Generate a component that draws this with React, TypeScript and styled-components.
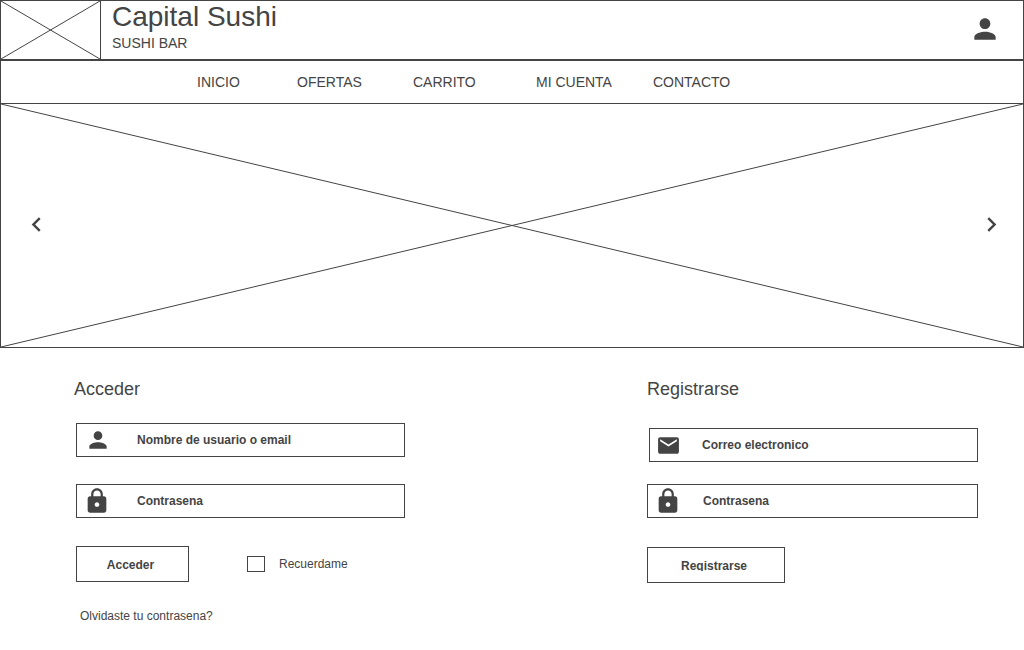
import React from "react";
import styled, { createGlobalStyle } from "styled-components";
import { MdChevronLeft, MdChevronRight, MdEmail, MdLock, MdPerson } from "react-icons/md";

const ink = "#444";

const GlobalStyle = createGlobalStyle`
  *, *::before, *::after { box-sizing: border-box; }
  body {
    margin: 0;
    background: #fff;
    color: ${ink};
    font-family: "Liberation Sans", Arial, sans-serif;
    font-size: 12px;
  }
  h1, h2, p { margin: 0; font-weight: 400; }
  button, input { font: inherit; color: inherit; }
  svg { display: block; flex: none; }
`;

const Header = styled.header`
  display: flex;
  height: 60px;
  border: 1px solid ${ink};
`;

const Logo = styled.div`
  width: 100px;
  border-right: 1px solid ${ink};
`;

const Brand = styled.div`
  flex: 1;
  padding-left: 11px;
`;

const BrandName = styled.h1`
  font-size: 28px;
  line-height: 32px;
`;

const Tagline = styled.p`
  font-size: 14px;
  line-height: 20px;
`;

const IconButton = styled.button`
  display: flex;
  align-items: center;
  padding: 0;
  border: 0;
  background: none;
  cursor: pointer;
`;

const AccountButton = styled(IconButton)`
  margin-right: 22px;
  padding-bottom: 2px;
`;

const Nav = styled.nav`
  display: grid;
  grid-template-columns: 100px 116px 123px 117px auto;
  justify-content: start;
  align-items: center;
  height: 43px;
  padding-left: 196px;
  border: 1px solid ${ink};
  border-bottom: 0;
`;

const NavLink = styled.a`
  color: inherit;
  font-size: 14px;
  line-height: 20px;
  text-decoration: none;
  white-space: nowrap;
`;

const Hero = styled.section`
  display: grid;
  height: 245px;
  border: 1px solid ${ink};
  > * { grid-area: 1 / 1; }
`;

const HeroControls = styled.div`
  display: flex;
  align-items: center;
  justify-content: space-between;
  padding: 0 17px 2px 21px;
`;

const Cross = styled.svg`
  width: 100%;
  height: 100%;
  stroke: ${ink};
  stroke-width: 1;
`;

const Main = styled.main`
  display: grid;
  grid-template-columns: minmax(0, 331px) minmax(0, 331px);
  justify-content: space-between;
  padding: 29px 46px 24px 74px;
`;

const Form = styled.form`
  display: flex;
  flex-direction: column;
`;

const Title = styled.h2<{ $gap: number }>`
  margin-bottom: ${(p) => p.$gap}px;
  font-size: 18px;
  line-height: 24px;
`;

const FieldBox = styled.label<{ $inset: number; $gap: number }>`
  display: flex;
  align-items: center;
  height: 34px;
  margin: 0 0 ${(p) => p.$gap}px ${(p) => p.$inset}px;
  border: 1px solid ${ink};
`;

const FieldIcon = styled.span<{ $width: number }>`
  display: flex;
  flex: none;
  justify-content: center;
  width: ${(p) => p.$width}px;
`;

const FieldInput = styled.input<{ $pad: number }>`
  flex: 1;
  min-width: 0;
  height: 100%;
  padding: 0 0 0 ${(p) => p.$pad}px;
  border: 0;
  outline: 0;
  background: transparent;
  font-weight: 700;
  &::placeholder { color: ${ink}; opacity: 1; }
`;

const Actions = styled.div<{ $inset: number }>`
  display: flex;
  align-items: center;
  padding-left: ${(p) => p.$inset}px;
`;

const Submit = styled.button<{ $width: number }>`
  width: ${(p) => p.$width}px;
  height: 36px;
  padding: 0 4px 0 0;
  border: 1px solid ${ink};
  background: #fff;
  font-weight: 700;
  cursor: pointer;
`;

const SubmitText = styled.span<{ $clip?: boolean }>`
  display: block;
  height: 12px;
  line-height: 14px;
  overflow: ${(p) => (p.$clip ? "hidden" : "visible")};
`;

const Remember = styled.label`
  display: flex;
  align-items: center;
  gap: 14px;
  margin-left: 58px;
`;

const Checkbox = styled.input`
  appearance: none;
  width: 18px;
  height: 16px;
  margin: 0;
  border: 1px solid ${ink};
  &:checked { background: ${ink}; }
`;

const Forgot = styled.a`
  align-self: flex-start;
  margin: 26px 0 0 6px;
  color: inherit;
  line-height: 16px;
  text-decoration: none;
`;

const Placeholder = () => (
  <Cross aria-hidden="true">
    <line x1="0" y1="0" x2="100%" y2="100%" />
    <line x1="0" y1="100%" x2="100%" y2="0" />
  </Cross>
);

type FieldProps = {
  label: string;
  type: string;
  icon: React.ReactNode;
  slot: number;
  pad: number;
  inset?: number;
  gap: number;
};

const Field = ({ label, type, icon, slot, pad, inset = 0, gap }: FieldProps) => (
  <FieldBox $inset={inset} $gap={gap}>
    <FieldIcon $width={slot}>{icon}</FieldIcon>
    <FieldInput type={type} placeholder={label} aria-label={label} $pad={pad} />
  </FieldBox>
);

const links = ["INICIO", "OFERTAS", "CARRITO", "MI CUENTA", "CONTACTO"];

export default function App() {
  return (
    <>
      <GlobalStyle />
      <Header>
        <Logo><Placeholder /></Logo>
        <Brand>
          <BrandName>Capital Sushi</BrandName>
          <Tagline>SUSHI BAR</Tagline>
        </Brand>
        <AccountButton type="button" aria-label="Mi cuenta"><MdPerson size={32} /></AccountButton>
      </Header>
      <Nav>
        {links.map((text) => <NavLink key={text} href="#">{text}</NavLink>)}
      </Nav>
      <Hero>
        <Placeholder />
        <HeroControls>
          <IconButton type="button" aria-label="Anterior"><MdChevronLeft size={29} /></IconButton>
          <IconButton type="button" aria-label="Siguiente"><MdChevronRight size={29} /></IconButton>
        </HeroControls>
      </Hero>
      <Main>
        <Form onSubmit={(e) => e.preventDefault()}>
          <Title $gap={22}>Acceder</Title>
          <Field label="Nombre de usuario o email" type="text" icon={<MdPerson size={26} />} slot={41} pad={19} inset={2} gap={27} />
          <Field label="Contrasena" type="password" icon={<MdLock size={28} />} slot={40} pad={20} inset={2} gap={28} />
          <Actions $inset={2}>
            <Submit type="submit" $width={113}><SubmitText>Acceder</SubmitText></Submit>
            <Remember><Checkbox type="checkbox" />Recuerdame</Remember>
          </Actions>
          <Forgot href="#">Olvidaste tu contrasena?</Forgot>
        </Form>
        <Form onSubmit={(e) => e.preventDefault()}>
          <Title $gap={27}>Registrarse</Title>
          <Field label="Correo electronico" type="email" icon={<MdEmail size={25} />} slot={37} pad={15} inset={2} gap={22} />
          <Field label="Contrasena" type="password" icon={<MdLock size={28} />} slot={40} pad={15} gap={29} />
          <Actions $inset={0}>
            <Submit type="submit" $width={138}><SubmitText $clip>Registrarse</SubmitText></Submit>
          </Actions>
        </Form>
      </Main>
    </>
  );
}
